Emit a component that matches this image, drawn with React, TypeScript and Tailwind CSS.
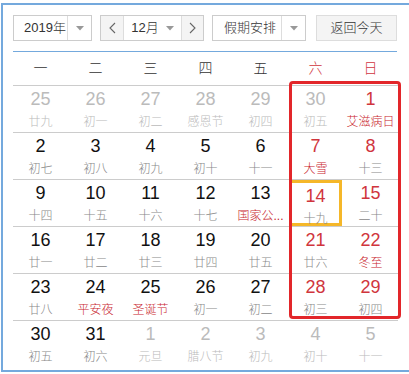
import React from 'react';

type Day = {
  d: number;
  lunar: string;
  other?: boolean; // not this month
  fest?: boolean; // red lunar / festival text
  today?: boolean;
};

const days: Day[] = [
  { d: 25, lunar: '廿九', other: true },
  { d: 26, lunar: '初一', other: true },
  { d: 27, lunar: '初二', other: true },
  { d: 28, lunar: '感恩节', other: true },
  { d: 29, lunar: '初四', other: true },
  { d: 30, lunar: '初五', other: true },
  { d: 1, lunar: '艾滋病日', fest: true },
  { d: 2, lunar: '初七' },
  { d: 3, lunar: '初八' },
  { d: 4, lunar: '初九' },
  { d: 5, lunar: '初十' },
  { d: 6, lunar: '十一' },
  { d: 7, lunar: '大雪', fest: true },
  { d: 8, lunar: '十三' },
  { d: 9, lunar: '十四' },
  { d: 10, lunar: '十五' },
  { d: 11, lunar: '十六' },
  { d: 12, lunar: '十七' },
  { d: 13, lunar: '国家公...', fest: true },
  { d: 14, lunar: '十九', today: true },
  { d: 15, lunar: '二十' },
  { d: 16, lunar: '廿一' },
  { d: 17, lunar: '廿二' },
  { d: 18, lunar: '廿三' },
  { d: 19, lunar: '廿四' },
  { d: 20, lunar: '廿五' },
  { d: 21, lunar: '廿六' },
  { d: 22, lunar: '冬至', fest: true },
  { d: 23, lunar: '廿八' },
  { d: 24, lunar: '平安夜', fest: true },
  { d: 25, lunar: '圣诞节', fest: true },
  { d: 26, lunar: '初一' },
  { d: 27, lunar: '初二' },
  { d: 28, lunar: '初三' },
  { d: 29, lunar: '初四' },
  { d: 30, lunar: '初五' },
  { d: 31, lunar: '初六' },
  { d: 1, lunar: '元旦', other: true },
  { d: 2, lunar: '腊八节', other: true },
  { d: 3, lunar: '初九', other: true },
  { d: 4, lunar: '初十', other: true },
  { d: 5, lunar: '十一', other: true },
];

const weekNames = ['一', '二', '三', '四', '五', '六', '日'];

const Caret = () => (
  <svg width="8" height="5" viewBox="0 0 8 5">
    <path d="M0 0h8L4 4.5z" fill="#999" />
  </svg>
);

const Chevron = ({ dir }: { dir: 'l' | 'r' }) => (
  <svg width="7" height="12" viewBox="0 0 7 12">
    <polyline
      points={dir === 'l' ? '6,1 1,6 6,11' : '1,1 6,6 1,11'}
      fill="none"
      stroke="#666"
      strokeWidth="1.1"
    />
  </svg>
);

const Cell = ({ day, col }: { day: Day; col: number }) => {
  const weekend = col >= 5;
  let numColor = 'text-[#111]';
  if (day.other) numColor = 'text-[#bbb]';
  else if (weekend) numColor = 'text-[#d0353d]';
  let lunarColor = 'text-[#888]';
  if (day.other) lunarColor = 'text-[#bbb]';
  else if (day.fest) lunarColor = 'text-[#c9262e]';

  return (
    <div
      className={
        'h-[46px] flex flex-col items-center pt-[3px] ' +
        (day.today ? 'border-[3px] border-[#f5b729] mx-[1px] pt-[0px]' : '')
      }
    >
      <div className={'text-[18px] leading-[21px] ' + numColor} style={{ fontFamily: '"Liberation Sans", Arial, sans-serif' }}>
        {day.d}
      </div>
      <div className={'mt-[4px] text-[12px] leading-[16px] font-light whitespace-nowrap ' + lunarColor}>{day.lunar}</div>
    </div>
  );
};

export default function App() {
  const rows: Day[][] = [];
  for (let i = 0; i < days.length; i += 7) rows.push(days.slice(i, i + 7));

  return (
    <div
      className="w-[409px] h-[374px] overflow-hidden bg-white"
      style={{ fontFamily: '"Liberation Sans", "Noto Sans CJK SC", sans-serif' }}
    >
      <div className="ml-[1px] mt-[3px] w-[420px] h-[369px] border-2 border-[#74a9dd] pl-[10px] pt-[10px]">
        <div className="w-[385px]">
          {/* toolbar */}
          <div className="flex items-center h-[26px] text-[13px] text-[#333] font-light whitespace-nowrap">
            <div className="flex h-full w-[79px] border border-[#ccc]">
              <div className="flex-1 flex items-center pl-[10px]">2019年</div>
              <div className="w-[24px] border-l border-[#ddd] flex items-center justify-center">
                <Caret />
              </div>
            </div>
            <div className="flex h-full w-[104px] border border-[#ccc] ml-[8px]">
              <div className="w-[23px] bg-[#f4f4f4] border-r border-[#ddd] flex items-center justify-center">
                <Chevron dir="l" />
              </div>
              <div className="flex-1 flex items-center justify-center gap-[7px]">
                <span>12月</span>
                <Caret />
              </div>
              <div className="w-[22px] bg-[#f4f4f4] border-l border-[#ddd] flex items-center justify-center">
                <Chevron dir="r" />
              </div>
            </div>
            <div className="flex h-full w-[94px] border border-[#ccc] ml-[8px]">
              <div className="flex-1 flex items-center pl-[11px]">假期安排</div>
              <div className="w-[24px] border-l border-[#ddd] flex items-center justify-center">
                <Caret />
              </div>
            </div>
            <div className="h-full w-[81px] ml-[10px] border border-[#ddd] bg-[#f4f4f4] flex items-center justify-center">
              返回今天
            </div>
          </div>

          <div className="mt-[10px] h-[1px] w-[384px] bg-[#74a9dd]" />

          {/* week header */}
          <div className="grid grid-cols-7 h-[33px] items-center text-[14px] text-[#333] font-light">
            {weekNames.map((w, i) => (
              <div key={w} className={'text-center ' + (i >= 5 ? 'text-[#d0353d]' : '')}>
                {w}
              </div>
            ))}
          </div>

          {/* days */}
          <div className="relative">
            {rows.map((row, r) => (
              <div key={r} className="grid grid-cols-7 border-t border-[#ccc]">
                {row.map((day, c) => (
                  <Cell key={c} day={day} col={c} />
                ))}
              </div>
            ))}
            <div className="absolute left-[276px] top-[-4px] w-[112px] h-[238px] border-[3px] border-[#e2262a] rounded-[4px] pointer-events-none" />
          </div>
        </div>
      </div>
    </div>
  );
}
